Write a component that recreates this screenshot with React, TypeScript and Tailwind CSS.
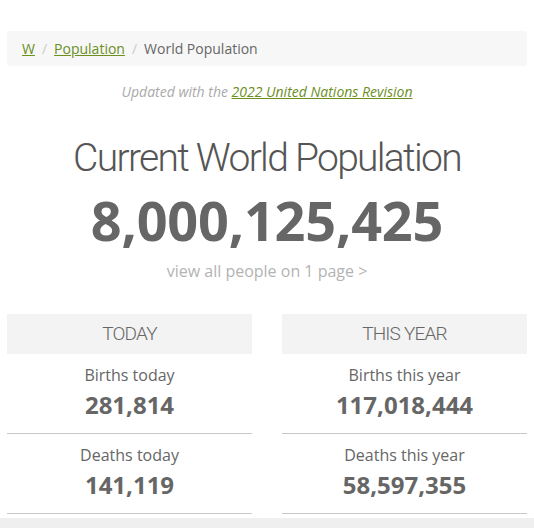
import React from "react";

const Stat = ({ label, value }: { label: string; value: string }) => (
  <div className="flex flex-col items-center border-b border-[#c8c8c8] pt-[10px] pb-[13px]">
    <div className="text-[16px] leading-[22px] text-[#666]">{label}</div>
    <div className="mt-[4px] text-[24px] leading-[30px] font-bold text-[#666]">{value}</div>
  </div>
);

const Col = ({ title, items }: { title: string; items: [string, string][] }) => (
  <div className="flex-1 flex flex-col">
    <div className="h-[40px] bg-[#f3f3f3] flex items-center justify-center text-[19px] font-light text-[#666] tracking-[-0.8px]" style={{ fontFamily: "Roboto, sans-serif" }}>
      {title}
    </div>
    {items.map(([l, v]) => (
      <Stat key={l} label={l} value={v} />
    ))}
  </div>
);

export default function App() {
  return (
    <div className="w-[534px] h-[528px] bg-white overflow-hidden flex flex-col" style={{ fontFamily: '"Open Sans", sans-serif' }}>
      <div className="px-[7px] pt-[31px]">
        <div className="h-[35px] bg-[#f6f7f6] rounded-[3px] flex items-center px-[15px] text-[14px] text-[#666]">
          <a className="text-[#6c8f1f] underline">W</a>
          <span className="text-[#ccc] px-[7px]">/</span>
          <a className="text-[#6c8f1f] underline">Population</a>
          <span className="text-[#ccc] px-[7px]">/</span>
          <span>World Population</span>
        </div>
      </div>
      <div className="mt-[16px] text-center text-[14px] leading-[20px] italic text-[#aaa]">
        Updated with the <a className="text-[#6c8f1f] underline">2022 United Nations Revision</a>
      </div>
      <div className="mt-[32px] text-center text-[39px] leading-[48px] font-light text-[#555] tracking-[-1.7px]" style={{ fontFamily: "Roboto, sans-serif" }}>
        Current World Population
      </div>
      <div className="mt-[5px] text-center text-[54px] leading-[66px] font-bold text-[#666] tracking-[-0.2px]">
        8,000,125,425
      </div>
      <div className="mt-[7px] text-center text-[16px] leading-[22px] text-[#b3b3b3]">
        view all people on 1 page &gt;
      </div>
      <div className="mt-[32px] px-[7px] flex gap-[30px]">
        <Col title="TODAY" items={[["Births today", "281,814"], ["Deaths today", "141,119"]]} />
        <Col title="THIS YEAR" items={[["Births this year", "117,018,444"], ["Deaths this year", "58,597,355"]]} />
      </div>
      <div className="mt-[4px] flex-1 bg-[#efefef]" />
    </div>
  );
}
